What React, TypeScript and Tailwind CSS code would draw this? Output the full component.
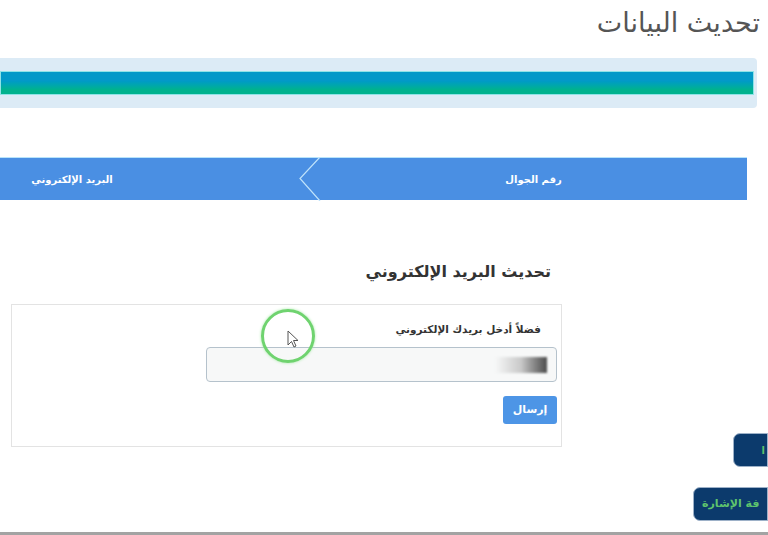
import React from "react";

const AR = { fontFamily: '"DejaVu Sans", "Noto Sans", sans-serif' };

export default function App() {
  return (
    <div className="relative w-[768px] h-[535px] overflow-hidden bg-white" style={AR}>
      {/* Title */}
      <div className="flex h-[58px] justify-end pr-[8px] pt-[4px]">
        <h1 dir="rtl" className="text-[27px] leading-[38px] text-[#555555]">تحديث البيانات</h1>
      </div>

      {/* Progress */}
      <div className="flex h-[50px] w-[757px] items-center rounded-r-[4px] bg-[#dcebf6]">
        <div className="h-[24px] w-[754px] border border-[#8fe3e6] bg-gradient-to-b from-[#0399c8] from-40% to-[#00b28e] to-80%" />
      </div>

      {/* Steps */}
      <div className="mt-[49px] flex h-[43px] w-[747px] items-center bg-[#4a8fe3] relative border-t border-[#b8e4fb]">
        <div className="flex w-[300px] justify-center pr-[156px] pl-[0px]">
          <span dir="rtl" className="text-[10px] font-bold text-white">البريد الإلكتروني</span>
        </div>
        <div className="flex flex-1 justify-center pl-[20px]">
          <span dir="rtl" className="text-[10px] font-bold text-white">رقم الجوال</span>
        </div>
        <svg className="absolute left-[296px] top-[-1px]" width="30" height="44" viewBox="0 0 30 44">
          <polyline points="24,0 4,21.5 24,44" fill="none" stroke="#bfe3fb" strokeWidth="1.2" />
        </svg>
      </div>

      {/* Lower section */}
      <div className="flex">
        <div className="w-[570px]">
          <div className="flex justify-end pr-[19px] pt-[60px]">
            <h2 dir="rtl" className="text-[16px] font-bold leading-[24px] text-[#333333]">تحديث البريد الإلكتروني</h2>
          </div>
          <div className="ml-[11px] mt-[20px] flex h-[143px] w-[551px] flex-col items-end border border-[#e3e3e3] pr-[4px]">
            <div className="pr-[16px] pt-[11px]">
              <span dir="rtl" className="text-[10.5px] font-bold text-[#333333]">فضلاً أدخل بريدك الإلكتروني</span>
            </div>
            <div className="mt-[7px] flex h-[35px] w-[351px] items-center justify-end rounded-[4px] border border-[#b5c2cc] bg-[#f7f8f8] pr-[9px]">
              <div className="h-[16px] w-[52px] bg-gradient-to-r from-[#f7f8f8] via-[#c9c9c9] to-[#4d4d4d] blur-[1px]" />
            </div>
            <button dir="rtl" className="mt-[14px] flex h-[28px] w-[54px] items-center justify-center rounded-[3px] bg-[#4d95e6] text-[11px] font-bold text-white">
              إرسال
            </button>
          </div>
        </div>
        <div className="flex flex-1 flex-col items-end pt-[233px]">
          <div className="flex h-[34px] w-[35px] items-center justify-end overflow-hidden rounded-l-[7px] border border-[#9db1c8] bg-[#0c3a6c] pr-[2px]">
            <span dir="rtl" className="whitespace-nowrap text-[10px] font-bold text-[#5ec46d]">ا</span>
          </div>
          <div className="mt-[20px] flex h-[34px] w-[75px] items-center justify-start overflow-hidden rounded-l-[7px] border border-[#9db1c8] bg-[#0c3a6c] pl-[8px]">
            <span dir="rtl" className="whitespace-nowrap text-[11px] font-bold text-[#5ec46d]">فة الإشارة</span>
          </div>
        </div>
      </div>

      {/* Bottom line */}
      <div className="absolute bottom-0 left-0 h-[3px] w-full bg-[#a3a3a3]" />

      {/* Green click circle + cursor overlay */}
      <div className="absolute left-[261px] top-[309px] h-[54px] w-[54px] rounded-full border-[3px] border-[#6fd36f] shadow-[0_0_3px_#a8eaa8]" />
      <svg className="absolute left-[287px] top-[330px]" width="14" height="20" viewBox="0 0 14 20">
        <path d="M1 1 L1 15 L4.5 11.5 L7 17 L9 16 L6.5 10.5 L11 10.5 Z" fill="#ffffff" stroke="#555555" strokeWidth="1" strokeLinejoin="round" />
      </svg>
    </div>
  );
}
